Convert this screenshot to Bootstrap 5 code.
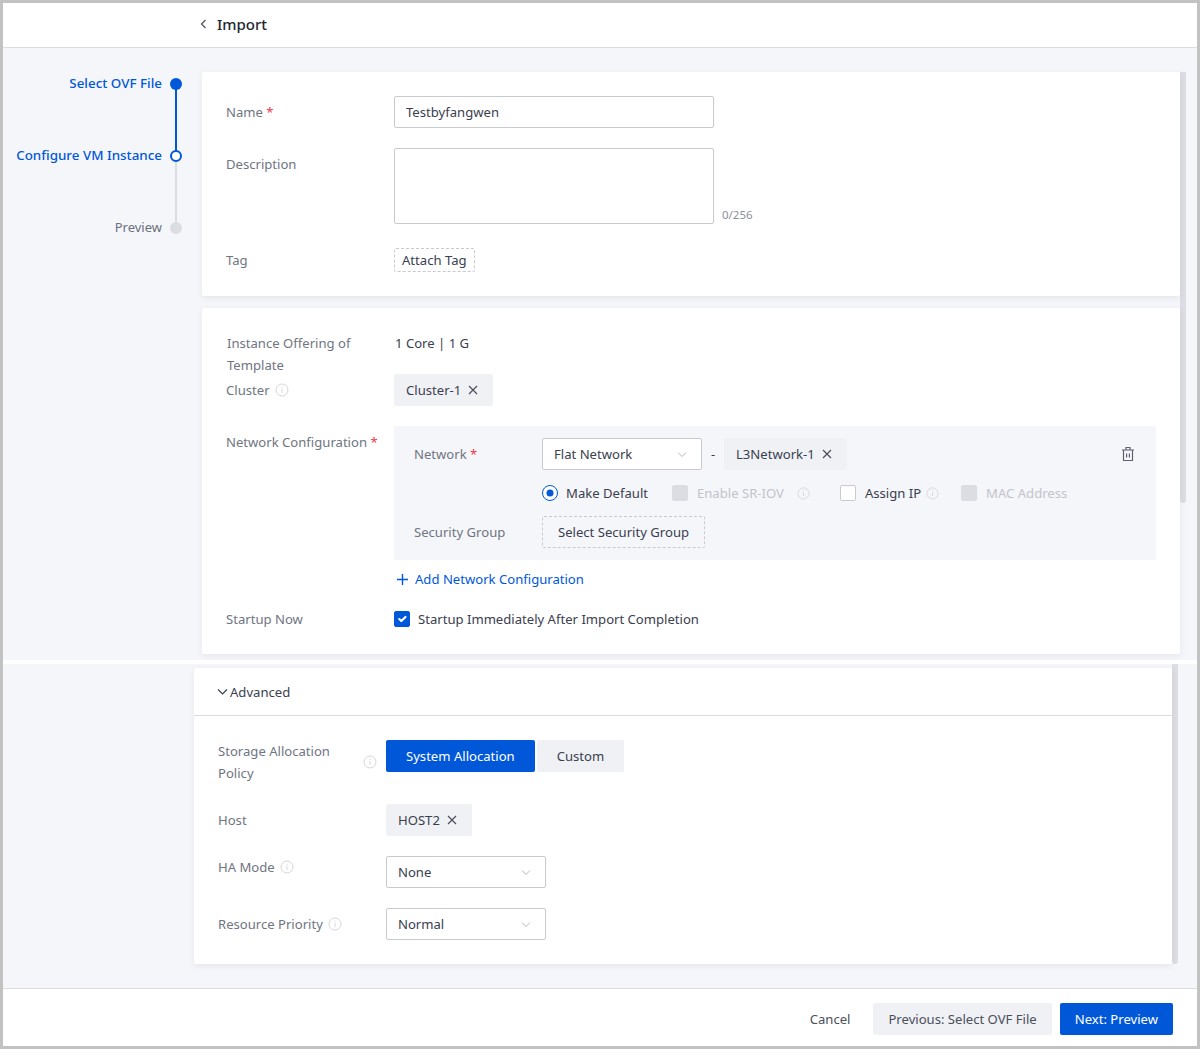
<!DOCTYPE html>
<html>
<head>
  <meta charset="utf-8">
  <title>Import</title>
  <link rel="stylesheet" href="https://cdn.jsdelivr.net/npm/bootstrap@5.3.0/dist/css/bootstrap.min.css">
  <style>
    html, body { height: 100%; }
    body { font-family: "Noto Sans", "Liberation Sans", sans-serif; font-size: 13.1px; line-height: 22px; color: #3a4050; background: #fff; }
    .frame { height: 1049px; border: 3px solid #c2c2c2; display: flex; flex-direction: column; overflow: hidden; background: #f5f6fa; }
    .top-head { height: 45px; flex: none; background: #fff; border-bottom: 1px solid #dcdde2; padding: 0 0 3px 197px; font-size: 15px; font-weight: 500; color: #23262f; }
    .head-title { margin-left: 9px; }
    .pane-a { height: 612px; flex: none; padding-top: 24px; }
    .strip { height: 4px; flex: none; background: #fff; }
    .pane-b { flex: 1; padding-top: 4px; padding-left: 191px; }
    .steps { width: 199px; flex: none; }
    .step-row { height: 72px; padding-right: 20px; gap: 8px; color: #6b7080; position: relative; }
    .step-row.on { color: #0058d9; }
    .step-row.last { height: 24px; }
    .step-row span { line-height: 22px; font-size: 13.4px; }
    .step-row.last span { font-size: 13px; }
    .step-dot { width: 12px; height: 12px; border-radius: 50%; background: #dcdde2; margin-top: 6px; flex: none; position: relative; z-index: 1; }
    .step-dot.full { background: #0058d9; }
    .step-dot.ring { background: #fff; border: 2px solid #0058d9; }
    .step-line { position: absolute; width: 2px; right: 25px; top: 12px; height: 72px; background: #dcdde2; }
    .step-line.on { background: #0058d9; }
    .sheet { width: 978px; flex: none; }
    .pane-card { border: 0; border-radius: 2px; box-shadow: 0 2px 6px rgba(40, 50, 80, .08); background: #fff; }
    .card-one { height: 224px; padding: 24px; }
    .card-two { height: 346px; margin-top: 12px; padding: 24px; }
    .card-three { height: 296px; }
    .fake-scroll { width: 6px; flex: none; background: #dcdde2; border-radius: 0 0 3px 3px; }
    .scroll-a { height: 431px; }
    .scroll-b { height: 300px; margin-top: -4px; }
    .fld { color: #6f7582; flex: none; width: 168px; }
    .fld-wrap { color: #6f7582; flex: none; width: 168px; padding-left: 1px; }
    .fld-tip { gap: 5px; }
    .req { color: #f0394d; }
    .ask { color: #3a4050; }
    .val-text { padding-left: 1px; }
    .desc-label { padding-top: 5px; }
    .net-label-top { padding-top: 5px; }
    .form-control.box, .form-select.box { border-radius: 2px; border: 1px solid #c8cad0; color: #3a4050; font-size: 13.1px; line-height: 22px; padding: 4px 11px; height: 32px; box-shadow: none; }
    .form-select.box { background-size: 12px 12px; background-position: right 13px center; padding-right: 30px; background-image: url("data:image/svg+xml,%3csvg xmlns='http://www.w3.org/2000/svg' viewBox='0 0 12 12'%3e%3cpath fill='none' stroke='%23b4b7bf' d='M2 4.5l4 4 4-4'/%3e%3c/svg%3e"); }
    .w-320 { width: 320px; }
    .w-160 { width: 160px; }
    .tall { height: 76px !important; resize: none; }
    .counter { font-size: 11.5px; color: #8b8f9a; line-height: 16px; margin: 0 0 1px 8px; }
    .dash-tag { height: 24px; line-height: 22px; padding: 0 7px; border: 1px dashed #c8cad0; border-radius: 2px; color: #3a4050; }
    .dash-btn { height: 32px; line-height: 30px; padding: 0 15px; border: 1px dashed #c8cad0; border-radius: 2px; color: #3a4050; }
    .chip { height: 32px; padding: 0 15px 0 12px; background: #f0f1f5; border-radius: 2px; color: #3a4050; gap: 7px; }
    .chip svg { flex: none; }
    .net-box { background: #f5f6fa; width: 762px; height: 134px; padding: 12px 20px; position: relative; }
    .net-label { width: 128px; flex: none; color: #6f7582; }
    .net-dash { width: 22px; text-align: center; }
    .opt-row { margin: 12px 0 0 128px; height: 22px; }
    .opt-gap { margin-top: 12px; }
    .opt-default { width: 106px; margin-left: 8px; }
    .opt-text { margin-left: 9px; }
    .opt-sriov { margin-left: 13px; }
    .opt-tip { margin-left: 5px; }
    .trash { position: absolute; right: 21px; top: 20px; }
    .dim { color: #c2c4ca; }
    .form-check-input.sq { width: 16px; height: 16px; margin: 0; border-radius: 2px; border: 1px solid #c8cad0; flex: none; box-shadow: none; }
    .form-check-input.sq.opt-assign { margin-left: 30px; }
    .form-check-input.sq.opt-mac { margin-left: 22px; }
    .form-check-input.sq:checked { background-color: #0058d9; border-color: #0058d9; }
    .form-check-input.sq:disabled { background-color: #dcdde2; border-color: #dcdde2; opacity: 1; }
    .form-check-input.rd { width: 16px; height: 16px; margin: 0; flex: none; box-shadow: none; }
    .form-check-input.rd:checked { background-color: #fff; border: 1px solid #0058d9; background-image: url("data:image/svg+xml,%3csvg xmlns='http://www.w3.org/2000/svg' viewBox='-4 -4 8 8'%3e%3ccircle r='2' fill='%230058d9'/%3e%3c/svg%3e"); }
    .add-row { margin: 8px 0 0 171px; }
    .add-link { color: #0058d9; text-decoration: none; gap: 7px; }
    .start-row { margin-top: 18px; }
    .adv-head { height: 48px; border-bottom: 1px solid #dcdde2; padding-left: 23px; gap: 2px; color: #3a4050; }
    .adv-body { padding: 24px 24px 0; }
    .policy-text { width: 145px; }
    .adv-row { margin-top: 20px; }
    .seg { height: 32px; padding: 0 20px; border: 0; border-radius: 2px; font-size: 13.1px; line-height: 22px; }
    .seg-on { background: #0058d9; color: #fff; }
    .seg-off { background: #f0f1f5; color: #3a4050; margin-left: 2px; }
    .foot { height: 58px; flex: none; background: #fff; border-top: 1px solid #dcdde2; padding: 2px 24px 0 0; gap: 8px; }
    .foot .btn { height: 32px; padding: 0 15px; border: 0; border-radius: 2px; font-size: 13.1px; line-height: 22px; }
    .btn-ghost { background: transparent; color: #4a4f5c; }
    .btn-soft { background: #f0f1f5; color: #4a4f5c; }
    .btn-main { background: #0058d9; color: #fff; }
    .btn-main:hover { background: #0058d9; color: #fff; }
    .tight-row { margin-top: -2px; }
  </style>
</head>
<body>
  <div class="frame">
    <div class="top-head d-flex align-items-center">
      <svg width="8" height="10" viewBox="0 0 8 10"><path d="M5.5 1L1.5 5l4 4" fill="none" stroke="#4a4f5c" stroke-width="1.2"/></svg>
      <span class="head-title">Import</span>
    </div>

    <div class="pane-a d-flex">
      <div class="steps">
        <div class="step-row on d-flex justify-content-end">
          <span class="fw-medium">Select OVF File</span><i class="step-dot full"></i><i class="step-line on"></i>
        </div>
        <div class="step-row on d-flex justify-content-end">
          <span class="fw-medium">Configure VM Instance</span><i class="step-dot ring"></i><i class="step-line"></i>
        </div>
        <div class="step-row last d-flex justify-content-end">
          <span>Preview</span><i class="step-dot"></i>
        </div>
      </div>
      <div class="sheet">
        <div class="card pane-card card-one">
          <div class="d-flex align-items-center mb-3 pb-1">
            <div class="fld">Name <span class="req">*</span></div>
            <input class="form-control box w-320" value="Testbyfangwen">
          </div>
          <div class="d-flex align-items-start">
            <div class="fld desc-label">Description</div>
            <textarea class="form-control box w-320 tall"></textarea>
            <div class="counter align-self-end">0/256</div>
          </div>
          <div class="d-flex align-items-center mt-4">
            <div class="fld">Tag</div>
            <div class="dash-tag">Attach Tag</div>
          </div>
        </div>

        <div class="card pane-card card-two">
          <div class="d-flex">
            <div class="fld-wrap">Instance Offering of<br>Template</div>
            <div class="ask val-text">1 Core | 1 G</div>
          </div>
          <div class="d-flex align-items-center tight-row">
            <div class="fld d-flex align-items-center fld-tip">Cluster
              <svg width="14" height="14" viewBox="0 0 14 14"><circle cx="7" cy="7" r="6" fill="none" stroke="#d5d7dc"/><path d="M7 6v4M7 3.8v1.2" stroke="#d5d7dc"/></svg>
            </div>
            <div class="chip d-inline-flex align-items-center">Cluster-1
              <svg width="10" height="10" viewBox="0 0 10 10"><path d="M1 1l8 8M9 1L1 9" stroke="#4a4f5c" stroke-width="1.2"/></svg>
            </div>
          </div>
          <div class="d-flex mt-3 pt-1">
            <div class="fld net-label-top">Network Configuration <span class="req">*</span></div>
            <div class="net-box">
              <div class="d-flex align-items-center">
                <div class="net-label">Network <span class="req">*</span></div>
                <select class="form-select box w-160"><option>Flat Network</option></select>
                <span class="net-dash">-</span>
                <div class="chip d-inline-flex align-items-center">L3Network-1
                  <svg width="10" height="10" viewBox="0 0 10 10"><path d="M1 1l8 8M9 1L1 9" stroke="#4a4f5c" stroke-width="1.2"/></svg>
                </div>
              </div>
              <svg class="trash" width="14" height="16" viewBox="0 0 14 16"><path d="M1 4h12M2.5 4v10.5h9V4M5 4V1.5h4V4M5.6 7.5v4M8.4 7.5v4" fill="none" stroke="#5d626f" stroke-width="1.2"/></svg>
              <div class="d-flex align-items-center opt-row">
                <input class="form-check-input rd" type="radio" checked>
                <span class="opt-default">Make Default</span>
                <input class="form-check-input sq" type="checkbox" disabled>
                <span class="dim opt-text">Enable SR-IOV</span>
                <svg class="opt-sriov" width="13" height="13" viewBox="0 0 14 14"><circle cx="7" cy="7" r="6" fill="none" stroke="#d5d7dc"/><path d="M7 6v4M7 3.8v1.2" stroke="#d5d7dc"/></svg>
                <input class="form-check-input sq opt-assign" type="checkbox">
                <span class="ask opt-text">Assign IP</span>
                <svg class="opt-tip" width="13" height="13" viewBox="0 0 14 14"><circle cx="7" cy="7" r="6" fill="none" stroke="#d5d7dc"/><path d="M7 6v4M7 3.8v1.2" stroke="#d5d7dc"/></svg>
                <input class="form-check-input sq opt-mac" type="checkbox" disabled>
                <span class="dim opt-text">MAC Address</span>
              </div>
              <div class="d-flex align-items-center opt-gap">
                <div class="net-label">Security Group</div>
                <div class="dash-btn">Select Security Group</div>
              </div>
            </div>
          </div>
          <div class="d-flex align-items-center add-row">
            <a class="add-link d-inline-flex align-items-center" href="#">
              <svg width="11" height="11" viewBox="0 0 11 11"><path d="M5.5 0v11M0 5.5h11" stroke="#0058d9" stroke-width="1.4"/></svg>
              Add Network Configuration
            </a>
          </div>
          <div class="d-flex align-items-center start-row">
            <div class="fld">Startup Now</div>
            <input class="form-check-input sq" type="checkbox" checked>
            <span class="ms-2 ask">Startup Immediately After Import Completion</span>
          </div>
        </div>
      </div>
      <div class="fake-scroll scroll-a"></div>
    </div>

    <div class="strip"></div>

    <div class="pane-b d-flex">
      <div class="sheet">
        <div class="card pane-card card-three">
          <div class="adv-head d-flex align-items-center">
            <svg width="11" height="8" viewBox="0 0 11 8"><path d="M1 1.5l4.5 4.5L10 1.5" fill="none" stroke="#3a4050" stroke-width="1.2"/></svg>
            <span>Advanced</span>
          </div>
          <div class="adv-body">
            <div class="d-flex">
              <div class="fld d-flex align-items-center">
                <span class="policy-text">Storage Allocation<br>Policy</span>
                <svg width="14" height="14" viewBox="0 0 14 14"><circle cx="7" cy="7" r="6" fill="none" stroke="#d5d7dc"/><path d="M7 6v4M7 3.8v1.2" stroke="#d5d7dc"/></svg>
              </div>
              <div class="d-flex">
                <button class="seg seg-on">System Allocation</button>
                <button class="seg seg-off">Custom</button>
              </div>
            </div>
            <div class="d-flex align-items-center adv-row">
              <div class="fld">Host</div>
              <div class="chip d-inline-flex align-items-center">HOST2
                <svg width="10" height="10" viewBox="0 0 10 10"><path d="M1 1l8 8M9 1L1 9" stroke="#4a4f5c" stroke-width="1.2"/></svg>
              </div>
            </div>
            <div class="d-flex align-items-start adv-row">
              <div class="fld d-flex align-items-center fld-tip">HA Mode
                <svg width="14" height="14" viewBox="0 0 14 14"><circle cx="7" cy="7" r="6" fill="none" stroke="#d5d7dc"/><path d="M7 6v4M7 3.8v1.2" stroke="#d5d7dc"/></svg>
              </div>
              <select class="form-select box w-160"><option>None</option></select>
            </div>
            <div class="d-flex align-items-center adv-row">
              <div class="fld d-flex align-items-center fld-tip">Resource Priority
                <svg width="14" height="14" viewBox="0 0 14 14"><circle cx="7" cy="7" r="6" fill="none" stroke="#d5d7dc"/><path d="M7 6v4M7 3.8v1.2" stroke="#d5d7dc"/></svg>
              </div>
              <select class="form-select box w-160"><option>Normal</option></select>
            </div>
          </div>
        </div>
      </div>
      <div class="fake-scroll scroll-b"></div>
    </div>

    <div class="foot d-flex align-items-center justify-content-end">
      <button class="btn btn-ghost">Cancel</button>
      <button class="btn btn-soft">Previous: Select OVF File</button>
      <button class="btn btn-main">Next: Preview</button>
    </div>
  </div>
  <script src="https://cdn.jsdelivr.net/npm/bootstrap@5.3.0/dist/js/bootstrap.bundle.min.js"></script>
</body>
</html>
